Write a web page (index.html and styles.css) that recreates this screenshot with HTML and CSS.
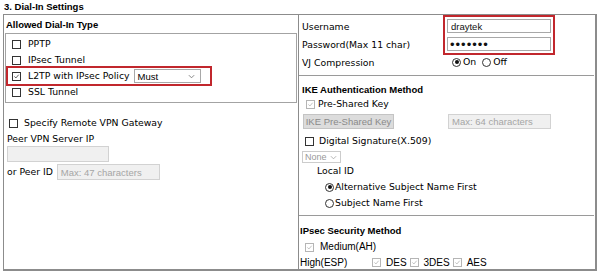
FILE: index.html
```html
<!DOCTYPE html>
<html lang="en">
<head>
  <meta charset="UTF-8" />
  <meta name="viewport" content="width=device-width, initial-scale=1.0" />
  <title>Dial-In Settings</title>
  <link rel="stylesheet" href="styles.css">
</head>
<body>
  <!-- TITLE -->
  <h3 class="page-title">3. Dial-In Settings</h3>

  <div class="settings">
    <!-- LEFT COLUMN -->
    <div class="col col-left">
      <div class="col-head">Allowed Dial-In Type</div>
      <div class="type-box">
        <label class="row"><span class="cb"></span>PPTP</label>
        <label class="row"><span class="cb"></span>IPsec Tunnel</label>
        <label class="row row-mark">
          <span class="cb"><svg viewBox="0 0 9 9"><path d="M1.8 4.4l1.9 2 3.6-4.2"/></svg></span>L2TP with IPsec Policy
          <span class="select select-must">Must<svg class="chev" viewBox="0 0 8 5"><path d="M1 1l3 3 3-3"/></svg></span>
        </label>
        <label class="row"><span class="cb"></span>SSL Tunnel</label>
      </div>

      <div class="remote">
        <label class="row remote-check"><span class="cb"></span>Specify Remote VPN Gateway</label>
        <div class="remote-label">Peer VPN Server IP</div>
        <span class="field field-ip"></span>
        <div class="row peer-id">or Peer ID <span class="field field-id">Max: 47 characters</span></div>
      </div>
    </div>

    <!-- RIGHT COLUMN -->
    <div class="col col-right">
      <div class="login">
        <div class="login-labels">
          <div>Username</div>
          <div>Password(Max 11 char)</div>
          <div>VJ Compression</div>
        </div>
        <div class="login-fields">
          <div class="cred-mark">
            <input class="text" type="text" value="draytek" />
            <input class="text text-pass" type="password" value="draytek" />
          </div>
          <div class="radios">
            <span class="rb rb-on"></span>On
            <span class="rb rb-gap"></span>Off
          </div>
        </div>
      </div>

      <div class="sep"></div>

      <!-- IKE -->
      <div class="sub-head">IKE Authentication Method</div>
      <div class="row r-psk"><span class="cb cb-off"><svg viewBox="0 0 9 9"><path d="M1.8 4.4l1.9 2 3.6-4.2"/></svg></span>Pre-Shared Key</div>
      <div class="psk-line">
        <span class="btn-off">IKE Pre-Shared Key</span>
        <span class="field field-psk">Max: 64 characters</span>
      </div>
      <div class="row r-sig"><span class="cb"></span>Digital Signature(X.509)</div>
      <span class="select select-none">None<svg class="chev" viewBox="0 0 8 5"><path d="M1 1l3 3 3-3"/></svg></span>
      <div class="row r-local">Local ID</div>
      <div class="row r-radio"><span class="rb rb-on"></span>Alternative Subject Name First</div>
      <div class="row r-radio"><span class="rb"></span>Subject Name First</div>

      <div class="sep sep-low"></div>

      <!-- IPSEC -->
      <div class="sub-head sub-ipsec">IPsec Security Method</div>
      <div class="row r-medium"><span class="cb cb-off"><svg viewBox="0 0 9 9"><path d="M1.8 4.4l1.9 2 3.6-4.2"/></svg></span>Medium(AH)</div>
      <div class="row r-high">
        <span class="high-label">High(ESP)</span>
        <span class="cb cb-off"><svg viewBox="0 0 9 9"><path d="M1.8 4.4l1.9 2 3.6-4.2"/></svg></span><span class="algo">DES</span>
        <span class="cb cb-off"><svg viewBox="0 0 9 9"><path d="M1.8 4.4l1.9 2 3.6-4.2"/></svg></span><span class="algo">3DES</span>
        <span class="cb cb-off"><svg viewBox="0 0 9 9"><path d="M1.8 4.4l1.9 2 3.6-4.2"/></svg></span><span class="algo">AES</span>
      </div>
    </div>
  </div>
</body>
</html>
```

FILE: styles.css
```css
/* GLOBAL */
body { margin:0; background:#fff; color:#000; font:9.3px/1 "DejaVu Sans", sans-serif; }
.page-title { margin:0; height:14px; padding-left:4px; font:bold 9.5px/13px "Liberation Sans", sans-serif; }

/* FRAME */
.settings { margin-left:3px; width:591px; height:254px; display:grid; grid-template-columns:295px 1fr;
  border:1px solid #8c8c8c; border-right-width:2px; border-bottom-width:2px; }
.col-left { border-right:1px solid #8c8c8c; }
.col-head { height:18px; padding-left:2px; font:bold 9.5px/19px "Liberation Sans", sans-serif; }
.sub-head { height:15px; margin-top:6px; padding-left:3px; font:bold 9.5px/16px "Liberation Sans", sans-serif; }

/* ROWS */
.row { display:flex; align-items:center; height:16px; white-space:nowrap; }

/* checkbox + radio */
.cb { width:9px; height:9px; box-sizing:border-box; border:1px solid #333; background:#fff; flex:none; }
.cb svg { display:block; width:7px; height:7px; fill:none; stroke:#333; stroke-width:1; }
.cb-off { border-color:#b5b5b5; }
.cb-off svg { stroke:#b0b0b0; }
.rb { width:9px; height:9px; box-sizing:border-box; border:1px solid #333; border-radius:50%; flex:none; position:relative; }
.rb-on::after { content:""; position:absolute; left:1.5px; top:1.5px; width:4px; height:4px; border-radius:50%; background:#111; }

/* LEFT: dial-in type box */
.type-box { margin:0 1px; height:64px; padding:2px 0; border:1px solid #a3a3a3; }
.type-box .row { padding-left:6px; }
.type-box .cb { margin-right:7px; }
.row-mark { width:206px; height:20px; margin:-2px 0; box-sizing:border-box; outline:2px solid #c1272d; outline-offset:-2px; }

.select { display:inline-flex; align-items:center; justify-content:space-between; box-sizing:border-box;
  height:14px; padding:0 5px 0 3px; border:1px solid #a8a8a8; background:#fff; font:9.5px "Liberation Sans", sans-serif; }
.select .chev { width:7px; height:5px; fill:none; stroke:#777; stroke-width:1; }
.select-must { width:67px; margin-left:4px; }
.select-none { width:39px; height:12px; margin:3px 0 0 3px; padding:0 3px 0 2px; color:#999; border-color:#ccc; font-size:9px; }
.select-none .chev { stroke:#aaa; }

/* LEFT: remote gateway */
.remote { margin-top:12px; }
.remote-check { padding-left:5px; }
.remote-check .cb { margin-right:6px; }
.remote-label { height:14px; margin-top:1px; padding-left:3px; line-height:14px; }
.field { display:inline-flex; align-items:center; box-sizing:border-box; height:16px; padding-left:3px;
  background:#f0f0f0; border:1px solid #d2d2d2; color:#a5a5a5; font:9.5px "Liberation Sans", sans-serif; }
.field-ip { width:102px; margin-left:3px; display:flex; }
.peer-id { margin-top:2px; padding-left:3px; }
.field-id { width:103px; margin-left:4px; }

/* RIGHT: login */
.login { display:flex; padding-top:2px; }
.login-labels { width:145px; padding-left:3px; }
.login-labels div { height:18px; line-height:19px; }
.cred-mark { display:flex; flex-direction:column; gap:4px; margin-top:2px; outline:2px solid #c1272d; outline-offset:2px; }
.text { box-sizing:border-box; width:104px; height:14px; margin:0; padding:0 3px; border:1px solid #a8a8a8;
  font:9.5px "Liberation Sans", sans-serif; color:#111; }
.text-pass { font-size:13px; letter-spacing:1px; padding-left:2px; }
.radios { display:flex; align-items:center; height:18px; margin-top:2px; padding-left:5px; }
.radios .rb { margin-right:2px; }
.radios .rb-gap { margin-left:6px; }

.sep { height:1px; margin:4px 1px 0 0; background:#9a9a9a; }
.sep-low { margin-top:5px; }

/* RIGHT: IKE */
.r-psk { height:14px; padding-left:7px; }
.r-psk .cb { margin-right:3px; }
.psk-line { display:flex; justify-content:space-between; width:248px; margin:3px 0 0 4px; }
.btn-off { display:inline-flex; align-items:center; justify-content:center; box-sizing:border-box; width:91px; height:15px;
  background:#dcdcdc; border:1px solid #c4c4c4; color:#8a8a8a; font:9.5px "Liberation Sans", sans-serif; }
.field-psk { width:103px; height:15px; }
.r-sig { height:14px; margin-top:5px; padding-left:6px; }
.r-sig .cb { margin-right:5px; }
.r-local { height:14px; margin-top:1px; padding-left:18px; }
.r-radio { height:14px; margin-top:2px; padding-left:26px; }
.r-radio .rb { margin-right:1px; }

/* RIGHT: IPsec */
.sub-ipsec { height:16px; margin-top:7px; padding-left:1px; line-height:16px; }
.r-medium { height:14px; margin-top:1px; padding-left:6px; font-family:"Liberation Sans", sans-serif; font-size:10px; }
.r-medium .cb { margin-right:6px; }
.r-high { height:15px; margin-top:1px; padding-left:1px; font-family:"Liberation Sans", sans-serif; font-size:10px; }
.high-label { width:72px; }
.algo { margin:0 3px 0 5px; }
```
